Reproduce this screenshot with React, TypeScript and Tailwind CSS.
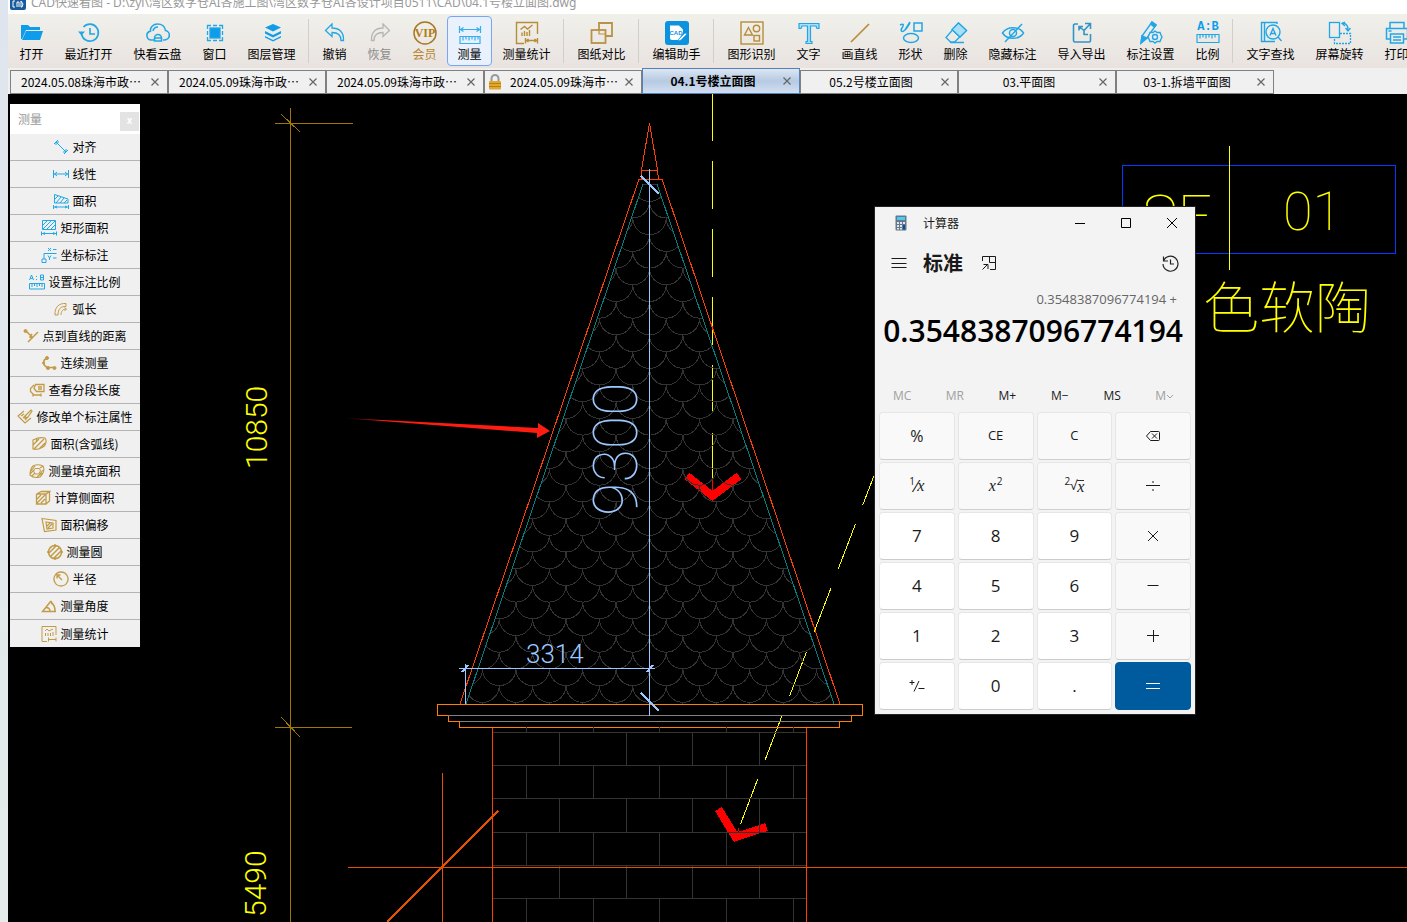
import type { ReactNode } from "react";
import clsx from "clsx";

const BLUE = "#22a7e6";
const GOLD = "#c29b45";

interface Tool {
  label: string;
  icon: string;
  active?: boolean;
  tone?: "gray" | "gold";
}

// null marks a vertical separator
const tools: (Tool | null)[] = [
  { label: "打开", icon: "open" },
  { label: "最近打开", icon: "recent" },
  { label: "快看云盘", icon: "cloud" },
  { label: "窗口", icon: "window" },
  { label: "图层管理", icon: "layers" },
  null,
  { label: "撤销", icon: "undo" },
  { label: "恢复", icon: "redo", tone: "gray" },
  { label: "会员", icon: "vip", tone: "gold" },
  { label: "测量", icon: "measure", active: true },
  { label: "测量统计", icon: "stats" },
  null,
  { label: "图纸对比", icon: "compare" },
  null,
  { label: "编辑助手", icon: "assistant" },
  null,
  { label: "图形识别", icon: "recognize" },
  { label: "文字", icon: "text" },
  { label: "画直线", icon: "line" },
  { label: "形状", icon: "shapes" },
  { label: "删除", icon: "erase" },
  { label: "隐藏标注", icon: "hide" },
  { label: "导入导出", icon: "transfer" },
  { label: "标注设置", icon: "settings" },
  { label: "比例", icon: "ratio" },
  null,
  { label: "文字查找", icon: "find" },
  { label: "屏幕旋转", icon: "rotate" },
  { label: "打印", icon: "print" },
];

const toolIcons: Record<string, ReactNode> = {
  open: (
    <g fill="#0d9deb">
      <path d="M1 4h7l2 2h10v3H6L2 18H1z" />
      <path d="M6 10h17l-3 9H2z" />
    </g>
  ),
  recent: (
    <g stroke={BLUE} strokeWidth="1.6">
      <path d="M4.5 13a8.5 8.5 0 1 0 2-7M13 7v6h5" />
      <path d="M1 10.500h7l-3.500 4z" fill={BLUE} stroke="none" />
    </g>
  ),
  cloud: (
    <g stroke={BLUE} strokeWidth="1.6">
      <path d="M8 19H5.500a4.500 4.500 0 0 1-1-8.900C4 6 7.500 3 11.500 3S19 5.500 19.500 9.500A4.800 4.800 0 0 1 18.500 19H17" />
      <path d="M8.500 20v-3a3.500 3.500 0 0 1 7 0v3zM8.500 17h7M7 10a5 5 0 0 1 5-4" />
    </g>
  ),
  window: (
    <g stroke={BLUE} strokeWidth="1.3">
      <rect x="7" y="7" width="10" height="10" fill="#0d9deb" />
      <path d="M4.500 8V4.500H8M16 4.500h3.500V8M19.500 16v3.500H16M8 19.500H4.500V16M10 4.500h4M10 19.500h4M4.500 10v4M19.500 10v4" />
    </g>
  ),
  layers: (
    <g fill="#0d9deb">
      <path d="M13 3l8 3.500-8 4-8-4z" />
      <path d="M5 10l8 4 8-4v2.500l-8 4-8-4z" />
      <path d="M5 15l8 4 8-4v1.500l-8 4-8-4z" />
    </g>
  ),
  undo: <path d="M9 3L2.500 9.500 9 15.500v-4c5 0 9 2 9 8h2.500C21 11 16 7 9 7z" stroke={BLUE} strokeWidth="1.3" />,
  redo: <path d="M15 3l6.500 6.500L15 15.500v-4c-5 0-9 2-9 8H3.500C3 11 8 7 15 7z" stroke="#b5b5b5" strokeWidth="1.3" />,
  vip: (
    <>
      <circle cx="12" cy="12" r="11" stroke="#a67824" strokeWidth="1.5" />
      <text x="12" y="16" textAnchor="middle" fontSize="12" fontWeight="700" fontFamily="'Liberation Serif', serif" fill="#b07d15" stroke="none">
        VIP
      </text>
    </>
  ),
  measure: (
    <g stroke="#35aeea" strokeWidth="1.2">
      <path d="M1.500 5v7M22.500 5v7M3 8.500h18M5.500 6.500l-3 2 3 2M18.500 6.500l3 2-3 2" />
      <path d="M2 15.500h20v7H2zM5 15.500v4M8 15.500v3M11 15.500v4M14 15.500v3M17 15.500v4M20 15.500v3" />
    </g>
  ),
  stats: (
    <g stroke="#b78d3a" strokeWidth="1.4">
      <path d="M9 22.500H1.500V1.500h21V13M5.500 8.500l4-3 3 2.500 5-4M7 11.500v3.500M9.500 10v5M12 11v4M14.500 9v6M10.500 17v5.500M22.500 17v5.500M11 19.500h11M13.500 18l-2 1.500 2 1.500M19.500 18l2 1.500-2 1.500" />
    </g>
  ),
  compare: (
    <g stroke="#ba9245" strokeWidth="1.8">
      <path d="M9 8V2h13v13h-6" />
      <rect x="1.500" y="9" width="14" height="13" />
      <path d="M9 8v5h6" strokeWidth="1.200" />
    </g>
  ),
  assistant: (
    <>
      <rect x="0" y="0" width="24" height="24" rx="3" fill="#0b93df" />
      <path d="M5 4.500h9l4 4V12l-5 7H7a2 2 0 0 1-2-2z" fill="#fff" />
      <text x="11" y="14" textAnchor="middle" fontSize="6" fontWeight="700" fontFamily="'Liberation Sans', sans-serif" fill="#0b93df">
        CAD
      </text>
      <path d="M14 18l6-6 2 1-6 6-3 1z" fill="#fff" stroke="#0b93df" strokeWidth=".6" />
    </>
  ),
  recognize: (
    <g stroke="#b78d3a" strokeWidth="1.4">
      <rect x="1" y="1" width="22" height="22" />
      <path d="M8.500 6.500l4 7.500h-8z" />
      <circle cx="16.500" cy="7.500" r="3.200" />
      <rect x="14" y="14.500" width="5.500" height="5.500" />
    </g>
  ),
  text: <path d="M2 2.500h20v5h-2l-1-2.500h-5.500v15.500H15v2H9v-2h1.500V5H5L4 7.500H2z" stroke={BLUE} strokeWidth="1.2" fill="#a9def7" />,
  line: <path d="M3 21L21 3" stroke="#b78d3a" strokeWidth="1.700" />,
  shapes: (
    <g stroke={BLUE} strokeWidth="1.5">
      <path d="M1 4c4-2 4 0 2 3s0 5 3 2l5-8M7 8l4-6" />
      <rect x="15" y="2" width="8" height="8" />
      <ellipse cx="12" cy="17" rx="7.500" ry="4.500" />
    </g>
  ),
  erase: (
    <g stroke={BLUE} strokeWidth="1.300">
      <path d="M14.500 2l8 7.500L10.500 21H6.500L2 16.500zM8 8.500l8 7.500M6 21.500h14" />
      <path d="M14.500 2l8 7.500-6.500 6.500-8-7.500z" fill="#a9def7" />
    </g>
  ),
  hide: (
    <g stroke={BLUE} strokeWidth="1.500">
      <path d="M1.500 12C6 5 18 5 22.500 12 18 19 6 19 1.500 12z" />
      <circle cx="12" cy="12" r="3.500" />
      <path d="M4 21L21 3" />
    </g>
  ),
  transfer: (
    <g stroke="#3195c6" strokeWidth="1.600">
      <path d="M8 3H5a1.500 1.500 0 0 0-1.500 1.500v15A1.500 1.500 0 0 0 5 21h14a1.500 1.500 0 0 0 1.500-1.500V13" />
      <path d="M15 2.500h5.500V8M20 3l-6 6.500V14M14 9.500L9 5.500M9 9.500V5.500h4M18 13.500h-4" />
    </g>
  ),
  settings: (
    <g stroke={BLUE} strokeWidth="1.400">
      <path d="M13 1l4 3L8 17l-6 5 1-7z" />
      <path d="M2 22l1-7 5 2z" fill={BLUE} />
      <path d="M13 1l4 3-1.500 2-4-3z" fill={BLUE} />
      <path d="M16 10l2 1.500h3l1 2.500 1 2-1 2-1 2.500h-3l-2 1.500-2-1.500h-3L10 18l-1-2 1-2 1-2.500h3z" fill="#eeece9" />
      <circle cx="16" cy="16" r="2.500" />
    </g>
  ),
  ratio: (
    <>
      <text x="12" y="9" textAnchor="middle" fontSize="12" fontWeight="700" fontFamily="'Liberation Mono', monospace" fill="#0d9deb">
        A:B
      </text>
      <path d="M1 13.500h22v8H1zM4 13.500v4M7 13.500v3M10 13.500v4M13 13.500v3M16 13.500v4M19 13.500v3" stroke={BLUE} strokeWidth="1.200" />
    </>
  ),
  find: (
    <g stroke={BLUE} strokeWidth="1.400">
      <path d="M18 3V1.500H2.500v19H16M5.500 1.500v19" />
      <circle cx="14" cy="11" r="7" />
      <path d="M19 16l3.500 4M11 14.500l3-7 3 7M12 12.500h4" />
    </g>
  ),
  rotate: (
    <g stroke={BLUE} strokeWidth="1.300">
      <rect x="1.500" y="1.500" width="10" height="15" />
      <path d="M14 2c4 0 6 2 6 7M17 1l-3 1.500L17 5M17.500 7l2.500 3 2.500-3" />
      <path d="M12 12.500h10.500v10H6.500V17" strokeDasharray="2 1" />
    </g>
  ),
  print: (
    <g stroke={BLUE} strokeWidth="1.500">
      <path d="M5 7V1.500h14V7M5 18H1.500V7.500h21V18H19" />
      <path d="M5.500 13h13v9h-13zM8 16h8M8 19h8M3.500 10h3" />
    </g>
  ),
};

const tabs = [
  { label: "2024.05.08珠海市政⋯" },
  { label: "2024.05.09珠海市政⋯" },
  { label: "2024.05.09珠海市政⋯" },
  { label: "2024.05.09珠海市⋯", locked: true },
  { label: "04.1号楼立面图", active: true },
  { label: "05.2号楼立面图" },
  { label: "03.平面图" },
  { label: "03-1.拆墙平面图" },
];

const measures = [
  { label: "对齐", color: BLUE, icon: <path d="M3 3l10 10M1 5l4-4M11 15l4-4M3 3h3M3 3v3M13 13h-3M13 13v-3" /> },
  { label: "线性", color: BLUE, icon: <path d="M.5 4v8M15.500 4v8M1 8h14M4 6L1.500 8 4 10M12 6l2.500 2L12 10" /> },
  {
    label: "面积",
    color: BLUE,
    icon: <path d="M1.500 10V1.500L15 6v4zM2 6l3-3M3 10l5-6M7 10l4-5M11 10l3-3M.5 12v4M15.500 12v4M1 14h14M4 13l-2 1 2 1M12 13l2 1-2 1" />,
  },
  {
    label: "矩形面积",
    color: BLUE,
    icon: <path d="M1.500.500h13v9h-13zM2 5l4-4M2 9l8-8M6 9l8-8M10 9l4-4M.5 11.500v4M15.500 11.500v4M1 13.500h14M4 12.500l-2 1 2 1M12 12.500l2 1-2 1" />,
  },
  {
    label: "坐标标注",
    color: BLUE,
    icon: <path d="M1 12h4v3.500H1zM3 12V6.500h12.500M7 1l3 3M10 1L7 4M12 2.500h3.500M7 8.500L8.500 11v2M10 8.500L8.500 11M12 11h3.500" />,
  },
  {
    label: "设置标注比例",
    color: BLUE,
    icon: <path d="M.5 6l2-5 2 5M1.500 4.500h2M7.500 2v1M7.500 5v1M11.500 1h3v5h-3zM11.500 3.500h3M.5 9.500h15V15H.5zM3 10v3M5.500 10v2M8 10v3M10.500 10v2M13 10v3" />,
  },
  { label: "弧长", color: GOLD, icon: <path d="M2 14C1.500 6 6 2 13 2.500v3C8 5 5 8 5 14zM8 14c0-4 2-6 5-6M11.500 6.500L13.500 8l-2 2" /> },
  {
    label: "点到直线的距离",
    color: GOLD,
    icon: (
      <>
        <path d="M5 14L15 4M3 3l6 6M9 6l-2 3 3 1" strokeWidth="1.500" />
        <circle cx="2.500" cy="3" r="1.500" fill={GOLD} />
      </>
    ),
  },
  {
    label: "连续测量",
    color: GOLD,
    icon: (
      <>
        <path d="M6 3C2 5 1 9 6 12.500h8" strokeWidth="1.600" />
        <g fill={GOLD}>
          <circle cx="6" cy="3" r="1.500" />
          <circle cx="2.500" cy="8" r="1" />
          <circle cx="7" cy="13" r="1.500" />
          <circle cx="13.500" cy="13" r="1.500" />
        </g>
      </>
    ),
  },
  { label: "查看分段长度", color: GOLD, icon: <path d="M6.500 2.500h8.500v7H7.500L5 6.500zM9 5h4M9 7h4M5 3L1.500 6.500v3L5 13h7M4 11.500v3M12 11.500v3" strokeWidth="1.300" /> },
  { label: "修改单个标注属性", color: GOLD, icon: <path d="M7 2L1 7l7 7 6-5M4 7l3-2M6 9l3-3M8 11l3-3M9 6l5-5 1 1-4 6-3 1z" strokeWidth="1.200" /> },
  { label: "面积(含弧线)", color: GOLD, icon: <path d="M2 13V4c4-2 8-3 12-2 2 3 1 7-2 9-3 2-6 3-10 2zM2 9l6-6M3 13L13 3M8 13l6-6M5 6l1-3" strokeWidth="1.200" /> },
  {
    label: "测量填充面积",
    color: GOLD,
    icon: (
      <>
        <path d="M4 3c4-2 8-1 10 0 2 4 0 8-3 11-4 1-8 0-10-2 0-4 1-7 3-9zM2 8l4-5M3 13l3-3M11 5l3-2M8 14l5-4M1 11l4-4M10 12l4-5" strokeWidth="1.100" />
        <path d="M6 5.500h4.500l1 2.500-2 3H6L4.500 8z" />
      </>
    ),
  },
  { label: "计算侧面积", color: GOLD, icon: <path d="M1.500 4l5-2.500h8L11 4zM1.500 4v10H11V4M11 14l3.500-3V1.500M2 9l4-4M2 13l8-8M6 13l4-4" strokeWidth="1.300" /> },
  { label: "面积偏移", color: GOLD, icon: <path d="M1 1.500l14 2V13L3.500 14.500zM5 5l7 1v5l-6 1zM6 9l3-3M7 11l4-4" strokeWidth="1.200" /> },
  { label: "测量圆", color: GOLD, icon: <path d="M8 1.500a6.500 6.500 0 1 0 .01 0zM2 9l7-7M4 12l8-8M7 14l7-7M8 0v2M8 14v2M0 8h2M14 8h2" strokeWidth="1.500" /> },
  { label: "半径", color: GOLD, icon: <path d="M8 1a7 7 0 1 0 .01 0zM9 9L4.500 4.500M4 7.500V4h3.500" strokeWidth="1.300" /> },
  { label: "测量角度", color: GOLD, icon: <path d="M15 13.500H1.500L10 3M10 3l1.500 3M5 9.500c3 0 4 2 4 4M10 5c3 1 4 4 4 8" strokeWidth="1.500" /> },
  { label: "测量统计", color: GOLD, icon: <path d="M6 15.500H1V.500h14v8.500M4 5l2-2 2 2 4-2M4.500 7v3M7 7v3M9.500 7v3M12 6v4M7.500 11.500v4M15 11.500v4M8 13.500h7" /> },
];

function Toolbar() {
  return (
    <div role="toolbar" className="flex h-[54px] shrink-0 overflow-hidden bg-linear-to-b from-[#f0f0eb] to-[#e9e3e0] pt-0.5 pl-px">
      {tools.map((tool, i) =>
        tool === null ? (
          <div key={i} className="mt-[3px] h-11 w-1.5 shrink-0 border-l-2 border-transparent">
            <div className="h-full w-px bg-[#d0cfcc]" />
          </div>
        ) : (
          <button
            key={i}
            type="button"
            className={clsx(
              "flex h-[50px] shrink-0 flex-col items-center rounded border pt-1 text-[12px] leading-[18px] whitespace-nowrap",
              tool.label.length === 2 && "w-[45px]",
              tool.label.length === 3 && "w-[57px]",
              tool.label.length === 4 && "w-[69px]",
              tool.active ? "border-[#7aa5f5] bg-[#e9f1fd]" : "border-transparent",
              tool.tone === "gray" && "text-[#8c8c8c]",
              tool.tone === "gold" && "text-[#b8862b]"
            )}
          >
            <svg width="24" height="24" viewBox="0 0 24 24" fill="none" className="shrink-0">
              {toolIcons[tool.icon]}
            </svg>
            {tool.label}
          </button>
        )
      )}
    </div>
  );
}

function Tabs() {
  return (
    <div className="flex h-[26px] shrink-0 items-end overflow-hidden bg-[#f0f0f0] pl-0.5">
      {tabs.map((tab, i) => (
        <div
          key={i}
          className={clsx(
            "flex w-[158px] shrink-0 items-center border text-[12px]",
            tab.active
              ? "h-[26px] border-[#5580b8] bg-linear-to-b from-[#dde6f2] via-[#b6cae3] to-[#d3dff0] font-bold"
              : "h-6 border-[#808080] bg-[#f0f0f0]"
          )}
        >
          {tab.locked && (
            <svg width="14" height="16" viewBox="0 0 14 16" className="ml-[3px] shrink-0">
              <path d="M3.500 8V4.500a3.500 3.500 0 0 1 7 0V8" fill="none" stroke="#999" strokeWidth="2" />
              <rect x="1" y="7" width="12" height="8.500" rx="1" fill="#e0a82e" />
              <path d="M1 9.500h12M1 12.500h12" stroke="#b98113" />
            </svg>
          )}
          <button type="button" className="min-w-0 flex-1 pl-2 text-center whitespace-nowrap">
            {tab.label}
          </button>
          <button type="button" aria-label="关闭" className="flex h-full w-6 shrink-0 items-center justify-center">
            <svg width="8" height="8" viewBox="0 0 8 8" stroke="#666" strokeWidth="1.200">
              <path d="M.5.500l7 7M7.500.500l-7 7" />
            </svg>
          </button>
        </div>
      ))}
    </div>
  );
}

function MeasurePanel() {
  return (
    <section className="absolute top-2.5 left-0.5 w-[130px] bg-[#f0f0f0]">
      <header className="flex h-[30px] items-center justify-between bg-white pr-px pl-2">
        <h2 className="text-[12px] text-[#999]">测量</h2>
        <button type="button" aria-label="关闭面板" className="mt-1 h-[19px] w-[19px] bg-[#e3e3e3] pb-0.5 text-[10px] leading-none font-bold text-white">
          x
        </button>
      </header>
      <ul>
        {measures.map((item) => (
          <li key={item.label} className="h-[27px] border-b border-[#b4b4b4] last:border-b-0">
            <button type="button" className="flex h-full w-full items-center justify-center gap-[3px] text-[12px] whitespace-nowrap">
              <svg width="16" height="16" viewBox="0 0 16 16" fill="none" stroke={item.color} className="shrink-0">
                {item.icon}
              </svg>
              {item.label}
            </button>
          </li>
        ))}
      </ul>
    </section>
  );
}

const PITCH = 33.4;
const APEX = 649.5;

// Rows of roof tiles, every other row shifted by half a tile
function tilePath() {
  let d = "";
  for (let row = 0; row <= 31; row++) {
    const top = 184.6 + row * (PITCH / 2);
    const shift = row % 2 ? PITCH / 2 : 0;
    for (let k = -7; k <= 7; k++) {
      const left = APEX + shift + k * PITCH - PITCH / 2;
      d += `M${left} ${top}a${PITCH / 2} ${PITCH / 2} 0 0 0 ${PITCH} 0`;
    }
  }
  return d;
}

const courses = [727, 732, 765, 798, 832, 865, 898, 932];

function brickPath() {
  let d = "";
  courses.forEach((y, i) => {
    if (i > 0) d += `M493 ${y}.5H806`;
    if (i === courses.length - 1) return;
    const start = i % 2 ? 559.5 : 526.5;
    for (let x = start; x < 806; x += 66.7) d += `M${x} ${y}V${courses[i + 1]}`;
  });
  return d;
}

function Drawing() {
  return (
    <svg className="absolute inset-0 h-full w-full" fill="none" fontFamily="Roboto, 'Noto Sans CJK SC', sans-serif" fontWeight="100">
      <defs>
        <clipPath id="roof">
          <path d="M643 184H657L834 704H466z" />
        </clipPath>
        <linearGradient id="fade" x1="0" x2="1">
          <stop offset="0" stopColor="#ff1c10" stopOpacity=".2" />
          <stop offset=".2" stopColor="#ff1c10" />
        </linearGradient>
      </defs>
      <g transform="translate(-8 -94)">
        <g shapeRendering="crispEdges">
          {/* left dimension line */}
          <path d="M290.500 108V2000M275 123.500H353M281 114l19 18M275 727.500H352M281 717l19 20" stroke="#a07800" />

          {/* section arrows */}
          <path d="M712.500 93V480" stroke="#ff0" strokeDasharray="48 20" />
          <path d="M880 460L739 828" stroke="#ff0" strokeDasharray="48 20.4" />
          <path d="M712.500 480v18M739 828l-3 8" stroke="#f00" />
          <path d="M687 476l25.500 20 26.500-20M718.500 809l17 28 31-10" stroke="#f00" strokeWidth="8" />

          {/* roof */}
          <path d={tilePath()} stroke="#333" clipPath="url(#roof)" />
          <path d="M643 184.500h14" stroke="#333" />
          <path d="M643 184L466 704M657 184l177 520" stroke="#008080" />
          <path d="M649.500 123l-8 47v9M649.500 123l8 47 1 9M641 170.500h17M638 179.500h24M639 179L460 704M662 179l178 525" stroke="#ff4000" />

          {/* cornice */}
          <path d="M448 715.500h404M459 721.500h392" stroke="#808080" />
          <path d="M448 715.500H437.500V704.500H862.500V715.500H851.500V721.500H839.500V727.500H459.500V721.500H448.500V715.500" stroke="#ff8000" />

          {/* wall */}
          <path d={brickPath()} stroke="#333" />
          <path d="M492.500 728V2000M806.500 728V2000" stroke="#ff4000" />
          <path d="M442.500 773V2000M348 867.500H4000" stroke="#e65000" />
          <path d="M387 922L498 811" stroke="#e65000" strokeWidth="2" />

          {/* measured lengths */}
          <g stroke="#9cc8ff">
            <path d="M649.500 169V716M459 668.500H655M465.500 664V704" />
            <path d="M641 176l18 18M641 693l18 18M462 672l6-7M647 672l6-7" strokeWidth="2" />
          </g>

          {/* title block */}
          <path d="M1122.500 165.500H1395.500V253.500H1122.500z" stroke="#003cff" />
          <path d="M1229.500 146V270" stroke="#ff0" />
        </g>

        <path d="M343 418L538 428v-5l12 8-13 7v-5z" fill="url(#fade)" />

        <g fill="#9cc8ff">
          <text transform="translate(637 516) rotate(-90)" fontSize="61">
            9300
          </text>
          <text x="526" y="663" fontSize="26" fontWeight="300">
            3314
          </text>
        </g>
        <g fill="#ff0">
          <text transform="translate(267 469) rotate(-90)" fontSize="30" fontWeight="300">
            10850
          </text>
          <text transform="translate(266 917) rotate(-90)" fontSize="30" fontWeight="300">
            5490
          </text>
          <text x="1142" y="237" fontSize="60">
            SF
          </text>
          <text x="1283" y="230" fontSize="54">
            01
          </text>
          <text x="1203" y="328" fontSize="56" fontFamily="'Noto Sans CJK SC', sans-serif">
            色软陶
          </text>
        </g>
      </g>
    </svg>
  );
}

const memoryKeys = [
  { label: "MC", off: true },
  { label: "MR", off: true },
  { label: "M+" },
  { label: "M−" },
  { label: "MS" },
  { label: "M", off: true, menu: true },
];

const keyGlyph = "font-['Open_Sans'] text-[13px]";
const keyDigit = "font-['Open_Sans'] text-[17px]";

const stroke = (d: string) => (
  <svg width="16" height="16" viewBox="0 0 16 16" fill="none" stroke="currentColor">
    <path d={d} />
  </svg>
);

const varX = <i className="font-['Liberation_Serif'] text-[16px]">x</i>;

const keys: { name: string; face: ReactNode; kind?: "digit" | "equals" }[] = [
  { name: "percent", face: <span className="font-['Open_Sans'] text-[16px]">%</span> },
  { name: "CE", face: <span className={keyGlyph}>CE</span> },
  { name: "C", face: <span className={keyGlyph}>C</span> },
  { name: "backspace", face: stroke("M5.500 3.500H13.500a1 1 0 0 1 1 1v7a1 1 0 0 1-1 1H5.500L1.500 8zM7 5.500l5 5M12 5.500l-5 5") },
  {
    name: "reciprocal",
    face: (
      <span className="flex items-center">
        <sup className="text-[10px]">1</sup>⁄{varX}
      </span>
    ),
  },
  {
    name: "square",
    face: (
      <span className="flex items-center gap-px">
        {varX}
        <sup className="text-[10px]">2</sup>
      </span>
    ),
  },
  {
    name: "root",
    face: (
      <span className="flex items-center">
        <sup className="text-[10px]">2</sup>
        <span className="text-[13px]">√</span>
        <span className="border-t border-[#333] leading-[10px]">{varX}</span>
      </span>
    ),
  },
  { name: "divide", face: stroke("M1 7.500h14M8 3v2M8 11v2") },
  { name: "7", face: "7", kind: "digit" },
  { name: "8", face: "8", kind: "digit" },
  { name: "9", face: "9", kind: "digit" },
  { name: "multiply", face: stroke("M3 3l10 10M13 3L3 13") },
  { name: "4", face: "4", kind: "digit" },
  { name: "5", face: "5", kind: "digit" },
  { name: "6", face: "6", kind: "digit" },
  { name: "subtract", face: stroke("M2.500 7.500h11") },
  { name: "1", face: "1", kind: "digit" },
  { name: "2", face: "2", kind: "digit" },
  { name: "3", face: "3", kind: "digit" },
  { name: "add", face: stroke("M2 7.500h12M8.500 2v12") },
  { name: "negate", face: stroke("M.5 4.500h5M3 2v5M5 13.500L10 3M9.500 10.500h6"), kind: "digit" },
  { name: "0", face: "0", kind: "digit" },
  { name: "decimal", face: ".", kind: "digit" },
  { name: "equals", face: stroke("M1 5.500h14M1 10.500h14"), kind: "equals" },
];

function Calculator() {
  return (
    <section className="absolute top-[113px] left-[867px] w-[320px] bg-[#f3f3f3] pb-1 text-[#1a1a1a] outline outline-[#222]">
      <header className="flex h-8 items-center pl-5">
        <svg width="12" height="16" viewBox="0 0 12 16" className="mr-4">
          <rect x=".5" y=".5" width="11" height="15" rx="1" fill="#64798a" />
          <rect x="2" y="2" width="8" height="3" fill="#4cc9f5" />
          <path d="M2 7h2v2H2zM5 7h2v2H5zM8 7h2v2H8zM2 10h2v2H2zM5 10h2v2H5zM2 13h2v1.500H2zM5 13h2v1.500H5z" fill="#dfe7ec" />
          <path d="M8 10h2v4.500H8z" fill="#0a4f9c" />
        </svg>
        <h2 className="flex-1 text-[12px]">计算器</h2>
        <button type="button" aria-label="最小化" className="flex h-8 w-[46px] items-center justify-center">
          <svg width="10" height="10" stroke="#000">
            <path d="M0 5.500h10" />
          </svg>
        </button>
        <button type="button" aria-label="最大化" className="flex h-8 w-[46px] items-center justify-center">
          <svg width="10" height="10" stroke="#000" fill="none">
            <path d="M.5.500h9v9h-9z" />
          </svg>
        </button>
        <button type="button" aria-label="关闭" className="flex h-8 w-[46px] items-center justify-center">
          <svg width="10" height="10" stroke="#000">
            <path d="M0 0l10 10M10 0L0 10" />
          </svg>
        </button>
      </header>

      <div className="flex h-12 items-center px-4">
        <button type="button" aria-label="导航">
          {stroke("M.5 3.500h15M.5 8.500h15M.5 12.500h15")}
        </button>
        <h1 className="ml-4 text-[20px] font-bold">标准</h1>
        <button type="button" aria-label="置顶" className="ml-[18px]">
          {stroke("M1.500 6V1.500H14.500V14.500H9M8.500 1.500v6h6M1.500 14.500l5-5M2.500 9.500h4.500v4.500")}
        </button>
        <button type="button" aria-label="历史记录" className="ml-auto">
          <svg width="17" height="17" viewBox="0 0 17 17" fill="none" stroke="#222" strokeWidth="1.200">
            <path d="M1.500 6A7.500 7.500 0 1 1 1 9M1.500 1.500V6H6M8.500 4.500V9H12" />
          </svg>
        </button>
      </div>

      <p className="h-6 pr-[18px] text-right font-['Open_Sans'] text-[13px] leading-6 text-[#666]">0.3548387096774194 +</p>
      <output className="block h-10 pr-3 text-right font-['Open_Sans'] text-[30px] leading-10 font-semibold text-black">
        0.3548387096774194
      </output>

      <div className="mt-[29px] grid h-8 grid-cols-6 pr-1 pl-px">
        {memoryKeys.map((key) => (
          <button
            key={key.label}
            type="button"
            className={clsx("flex items-center justify-center font-['Open_Sans'] text-[12px]", key.off && "text-[#a0a0a0]")}
          >
            {key.label}
            {key.menu && (
              <svg width="8" height="8" viewBox="0 0 8 8" fill="none" stroke="currentColor">
                <path d="M1 3l3 3 3-3" />
              </svg>
            )}
          </button>
        ))}
      </div>

      <div className="grid grid-cols-4 gap-x-[3px] gap-y-0.5 px-1">
        {keys.map((key) => (
          <button
            key={key.name}
            type="button"
            aria-label={key.name}
            className={clsx(
              "flex h-12 items-center justify-center rounded border",
              keyDigit,
              !key.kind && "border-[#e6e6e6] border-b-[#cfcfcf] bg-[#f9f9f9]",
              key.kind === "digit" && "border-[#e6e6e6] border-b-[#cbcbcb] bg-white",
              key.kind === "equals" && "border-[#005a9e] bg-[#005a9e] text-white"
            )}
          >
            {key.face}
          </button>
        ))}
      </div>
    </section>
  );
}

export default function App() {
  return (
    <div className="flex h-screen overflow-hidden bg-linear-to-b from-[#dfe5ee] to-[#e4ebea] font-['Noto_Sans_CJK_SC',sans-serif] text-black">
      <div className="w-2 shrink-0" />
      <div className="flex min-w-0 flex-1 flex-col">
        <header className="flex h-3.5 shrink-0 items-end gap-[5px] overflow-hidden bg-white pl-0.5">
          <svg width="16" height="14" viewBox="0 0 16 14" className="shrink-0">
            <path d="M0 0h16v8a2 2 0 0 1-2 2H2a2 2 0 0 1-2-2z" fill="#1a5a9e" />
            <path d="M5 1H3v6h2M7 7V2h2v5M11 1v6h1l1-3-2-3" fill="none" stroke="#fff" />
          </svg>
          <h1 className="mb-0.5 font-['Noto_Sans','Noto_Sans_CJK_SC',sans-serif] text-[12px] leading-[18px] whitespace-nowrap text-[#999]">
            {"CAD快速看图 - D:\\zyl\\湾区数字仓AI各施工图\\湾区数字仓AI各设计项目0511\\CAD\\04.1号楼立面图.dwg"}
          </h1>
        </header>
        <Toolbar />
        <Tabs />
        <main className="relative min-h-0 flex-1 overflow-hidden bg-black">
          <Drawing />
          <MeasurePanel />
          <Calculator />
        </main>
      </div>
    </div>
  );
}
